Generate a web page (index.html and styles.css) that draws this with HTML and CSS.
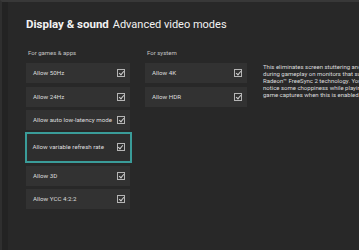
FILE: index.html
```html
<!DOCTYPE html>
<html>
<head>
<meta charset="utf-8">
<link rel="stylesheet" href="styles.css">
</head>
<body>
<div class="screen">
  <h1 class="title"><span class="title-main">Display &amp; sound</span> <span class="title-sub">Advanced video modes</span></h1>
  <div class="content">
    <section class="col col-games">
      <div class="section-label">For games &amp; apps</div>
      <div class="rows">
        <div class="row"><span class="label">Allow 50Hz</span><span class="check"></span></div>
        <div class="row"><span class="label">Allow 24Hz</span><span class="check"></span></div>
        <div class="row"><span class="label">Allow auto low-latency mode</span><span class="check"></span></div>
        <div class="row focused"><span class="label">Allow variable refresh rate</span><span class="check"></span></div>
        <div class="row"><span class="label">Allow 3D</span><span class="check"></span></div>
        <div class="row"><span class="label">Allow YCC 4:2:2</span><span class="check"></span></div>
      </div>
    </section>
    <section class="col col-system">
      <div class="section-label">For system</div>
      <div class="rows">
        <div class="row"><span class="label">Allow 4K</span><span class="check"></span></div>
        <div class="row"><span class="label">Allow HDR</span><span class="check"></span></div>
      </div>
    </section>
    <p class="desc">This eliminates screen stuttering and tearing<br>during gameplay on monitors that support AMD<br>Radeon™ FreeSync 2 technology. You might<br>notice some choppiness while playing back<br>game captures when this is enabled.</p>
  </div>
</div>
</body>
</html>
```
FILE: styles.css
```css
html, body {
  margin: 0;
  padding: 0;
}
body {
  width: 359px;
  height: 250px;
  overflow: hidden;
  background: #282828;
  font-family: Roboto, "Noto Sans", sans-serif;
  color: #dcdcdc;
}
.screen {
  box-sizing: border-box;
  width: 359px;
  height: 250px;
  border-top: 2px solid #383838;
  border-left: 2px solid #2f2f2f;
  box-shadow: inset 6px 0 0 #232323;
  padding: 0 0 0 24px;
  overflow: hidden;
}
.title {
  margin: 0;
  padding-top: 14px;
  height: 24px;
  font-size: 11.5px;
  font-weight: normal;
  color: #f2f2f2;
  white-space: nowrap;
  line-height: 16px;
}
.title-main {
  font-weight: bold;
}
.title-sub {
  font-size: 11px;
  margin-left: 1px;
}
.content {
  display: flex;
  margin-top: 8px;
}
.col {
  display: flex;
  flex-direction: column;
  flex-shrink: 0;
}
.col-games {
  width: 104px;
}
.col-system {
  width: 102px;
  margin-left: 15px;
}
.section-label {
  font-size: 6px;
  color: #c4c4c4;
  padding-left: 2px;
  height: 9px;
  line-height: 9px;
  margin-bottom: 6px;
}
.rows {
  display: flex;
  flex-direction: column;
}
.row {
  box-sizing: border-box;
  height: 20px;
  margin-bottom: 3.5px;
  background: #323232;
  display: flex;
  align-items: center;
  justify-content: space-between;
  padding: 0 5px 0 7px;
}
.row.focused {
  height: 31px;
  margin-top: -2px;
  margin-left: -1px;
  margin-right: -2px;
  margin-bottom: 3px;
  border: 2.5px solid #3a9c99;
  padding: 0 5.5px 0 5.5px;
  background: #2e2e2e;
}
.label {
  font-size: 6.2px;
  color: #dedede;
  white-space: nowrap;
}
.check {
  box-sizing: border-box;
  width: 8px;
  height: 8px;
  border: 1px solid #b5b5b5;
  position: relative;
}
.check::after {
  content: "";
  position: absolute;
  left: 1.5px;
  top: 0px;
  width: 2px;
  height: 4px;
  border-right: 1px solid #d0d0d0;
  border-bottom: 1px solid #d0d0d0;
  transform: rotate(40deg);
}
.desc {
  flex-shrink: 0;
  margin: 15px 0 0 16px;
  font-size: 6px;
  line-height: 7px;
  color: #dcdcdc;
  white-space: nowrap;
}
```
